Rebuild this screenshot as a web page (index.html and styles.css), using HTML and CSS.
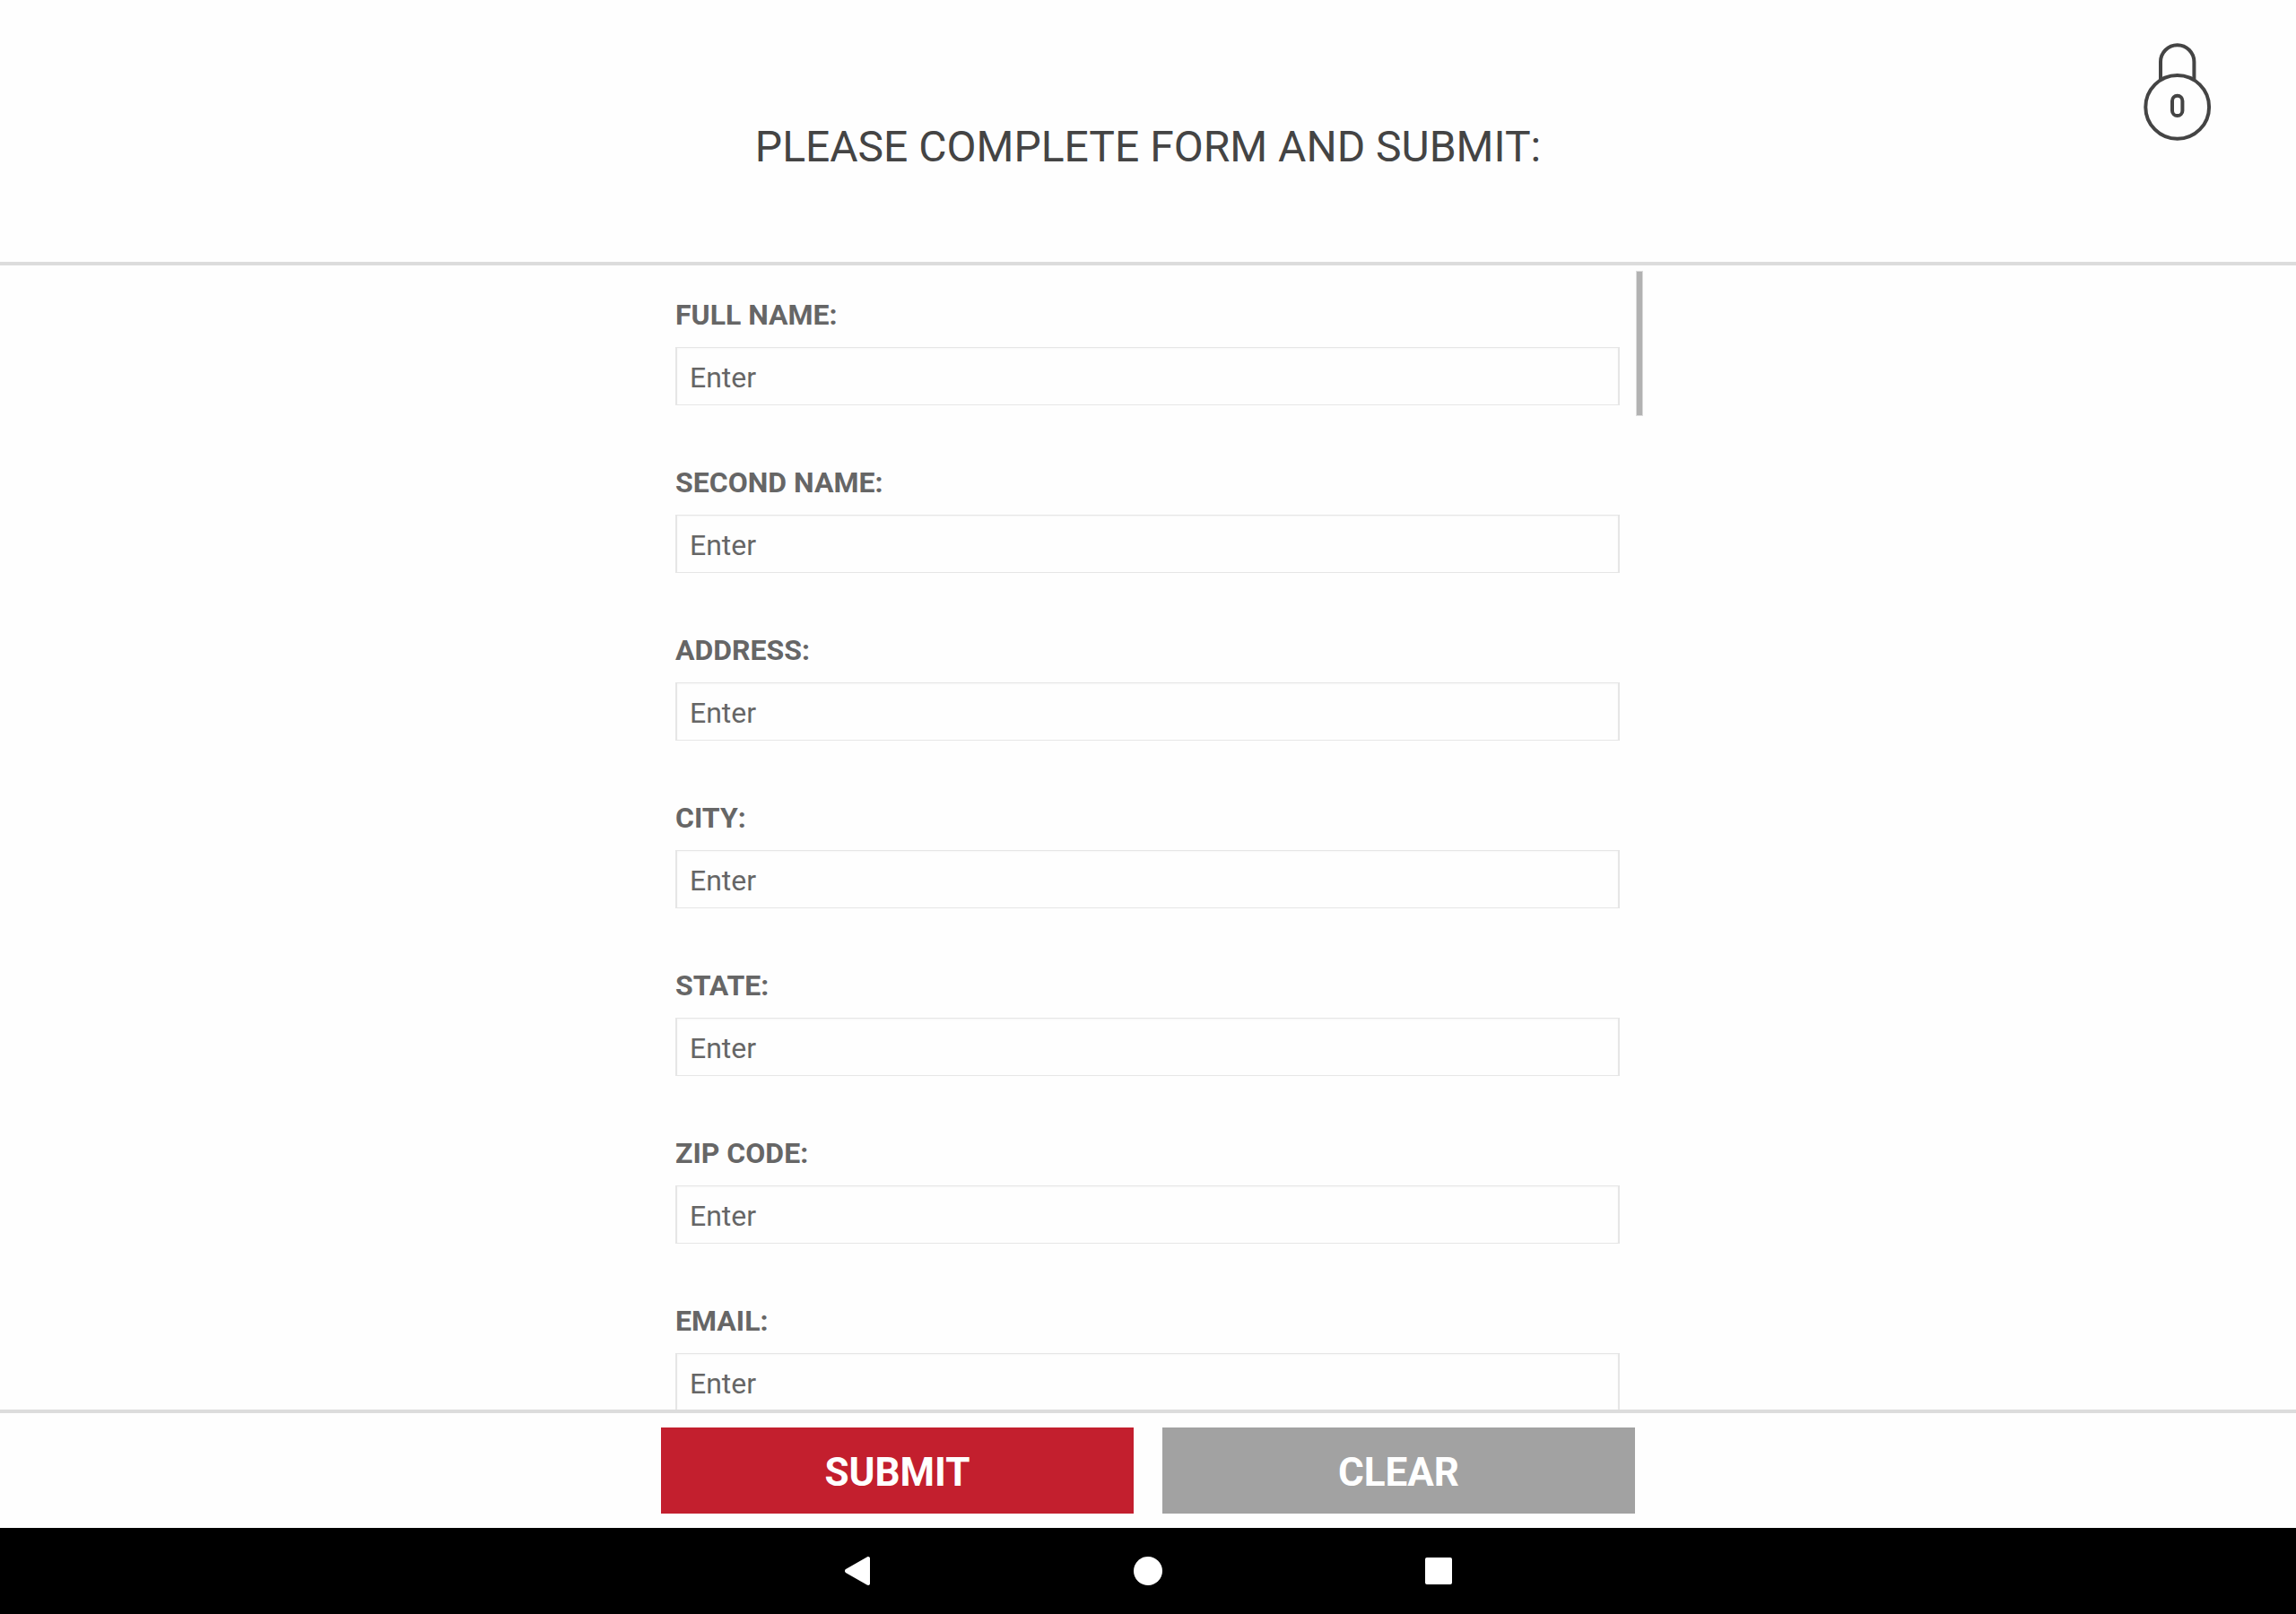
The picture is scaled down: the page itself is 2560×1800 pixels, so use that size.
FILE: index.html
```html
<!DOCTYPE html>
<html lang="en">
<head>
<meta charset="utf-8">
<meta name="viewport" content="width=device-width, initial-scale=1">
<title>Form</title>
<link rel="stylesheet" href="styles.css">
</head>
<body>
<header class="header">
  <h1 class="title">PLEASE COMPLETE FORM AND SUBMIT:</h1>
  <button class="lock" type="button">
    <svg width="80" height="112" viewBox="0 0 80 112" fill="none" stroke="#444" stroke-width="4">
      <path d="M21 42V23a18.700 18.700 0 0 1 37.400 0V42"/>
      <circle cx="39.700" cy="73.400" r="35.400"/>
      <rect x="34" y="60.700" width="11.400" height="22.400" rx="5.700"/>
    </svg>
  </button>
</header>

<main class="pane">
  <form class="fields" id="entry">
    <div class="field"><label class="label" for="full">FULL NAME:</label><input class="input" id="full" type="text" placeholder="Enter"></div>
    <div class="field"><label class="label" for="second">SECOND NAME:</label><input class="input" id="second" type="text" placeholder="Enter"></div>
    <div class="field"><label class="label" for="address">ADDRESS:</label><input class="input" id="address" type="text" placeholder="Enter"></div>
    <div class="field"><label class="label" for="city">CITY:</label><input class="input" id="city" type="text" placeholder="Enter"></div>
    <div class="field"><label class="label" for="state">STATE:</label><input class="input" id="state" type="text" placeholder="Enter"></div>
    <div class="field"><label class="label" for="zip">ZIP CODE:</label><input class="input" id="zip" type="text" placeholder="Enter"></div>
    <div class="field"><label class="label" for="email">EMAIL:</label><input class="input" id="email" type="email" placeholder="Enter"></div>
  </form>
  <div class="thumb"></div>
</main>

<footer class="actions">
  <div class="actions-row">
    <button class="action submit" type="submit" form="entry">SUBMIT</button>
    <button class="action clear" type="reset" form="entry">CLEAR</button>
  </div>
</footer>

<nav class="system">
  <button class="key" type="button">
    <svg width="32" height="32" viewBox="0 0 32 32" fill="#fff"><path d="M3 14.100 26.600 .4C28.300-.5 30 .2 30 2V30C30 31.800 28.300 32.500 26.600 31.600L3 17.900C1.600 17 1.600 15 3 14.100Z"/></svg>
  </button>
  <button class="key" type="button">
    <svg width="32" height="32" viewBox="0 0 32 32" fill="#fff"><circle cx="16" cy="16" r="16"/></svg>
  </button>
  <button class="key" type="button">
    <svg width="32" height="32" viewBox="0 0 32 32" fill="#fff"><rect x="1" y="1" width="30" height="30" rx="2"/></svg>
  </button>
</nav>
</body>
</html>
```

FILE: styles.css
```css
* {
  box-sizing: border-box;
}

body {
  margin: 0;
  height: 100vh;
  display: flex;
  flex-direction: column;
  background: #fefefe;
  color: #666;
  font-family: Roboto, "Liberation Sans", sans-serif;
  font-size: 32px;
}

button {
  padding: 0;
  border: 0;
  background: none;
  font: inherit;
  cursor: pointer;
}

svg {
  display: block;
}

.header {
  flex: none;
  display: grid;
  grid-template-columns: 1fr auto 1fr;
  padding: 46px 92px 72px;
  border-bottom: 4px solid #dcdcdc;
}

.title {
  grid-column: 2;
  margin: 0;
  padding: 90px 0 28px;
  color: #444;
  font-size: 48px;
  font-weight: 400;
  line-height: 56px;
}

.lock {
  justify-self: end;
  align-self: start;
}

.pane {
  flex: 1;
  min-height: 0;
  width: 100%;
  max-width: 1104px;
  margin: 0 auto;
  padding: 0 26px 0 25px;
  overflow: hidden;
  position: relative;
}

.fields {
  display: flex;
  flex-direction: column;
  gap: 66px;
  padding-top: 35px;
}

.field {
  display: flex;
  flex-direction: column;
  gap: 16px;
}

.label {
  font-weight: 700;
  line-height: 40px;
}

.input {
  width: 100%;
  height: 65px;
  padding: 2px 14px 0;
  border: solid #e6e6e6;
  border-width: 1px 2px;
  border-radius: 0;
  background: #fefefe;
  box-shadow: inset 0 1px 2px #f6f6f6;
  color: #666;
  font: inherit;
  outline: 0;
}

.input::placeholder {
  color: #666;
  opacity: 1;
}

/* Scroll position indicator, over the right edge of the pane */
.thumb {
  position: absolute;
  top: 6px;
  right: 0;
  width: 8px;
  height: 162px;
  border: 1px solid #dcdcdc;
  background: #b2b2b2;
}

.actions {
  flex: none;
  padding: 16px 0;
  border-top: 4px solid #dcdcdc;
}

.actions-row {
  display: flex;
  gap: 32px;
  max-width: 1086px;
  margin: 0 auto;
}

.action {
  flex: 1;
  height: 96px;
  padding-top: 3px;
  color: #fff;
  font-size: 44px;
  font-weight: 700;
}

.submit {
  background: #c31f2e;
}

.clear {
  background: #a2a2a2;
}

.system {
  flex: none;
  display: flex;
  justify-content: center;
  gap: 228px;
  background: #000;
}

.key {
  width: 96px;
  height: 96px;
  display: grid;
  place-items: center;
}
```
